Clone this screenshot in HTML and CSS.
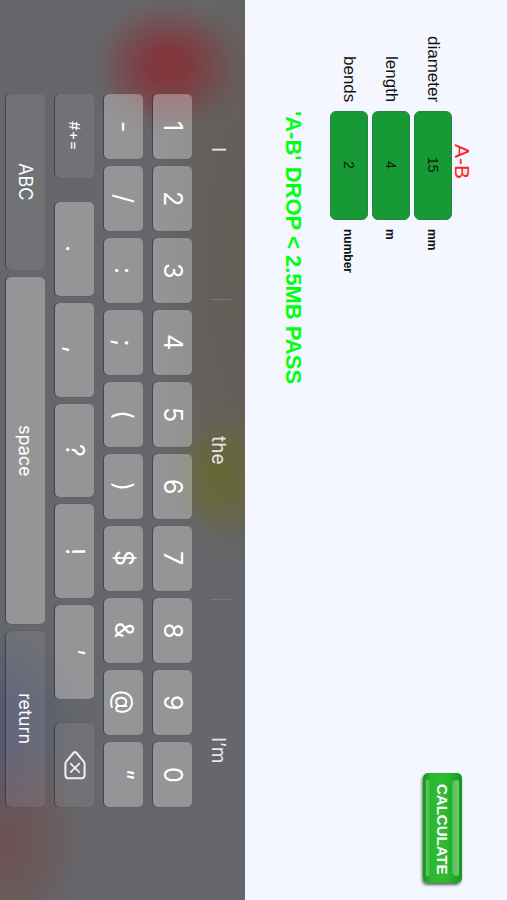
FILE: index.html
```html
<!DOCTYPE html>
<html lang="en">
<head>
    <meta charset="UTF-8">
    <meta name="viewport" content="width=device-width, initial-scale=1.0">
    <title>Pressure Drop</title>
    <link rel="stylesheet" href="styles.css">
</head>
<body>
    <main class="calculator">
        <form class="pipe-form" onsubmit="return false">
            <div class="pipe">
                <h1>A-B</h1>
                <div class="fields">
                    <label for="diameter">diameter</label>
                    <input type="text" id="diameter" value="15">
                    <span class="unit">mm</span>

                    <label for="length">length</label>
                    <input type="text" id="length" value="4">
                    <span class="unit">m</span>

                    <label for="bends">bends</label>
                    <input type="text" id="bends" value="2">
                    <span class="unit">number</span>
                </div>
            </div>
            <button type="submit" class="calculate">CALCULATE</button>
        </form>
        <p class="result">'A-B' DROP &lt; 2.5MB PASS</p>
    </main>

    <section class="keyboard">
        <div class="suggestions">
            <button type="button">I</button>
            <button type="button">the</button>
            <button type="button">I’m</button>
        </div>

        <div class="keys">
            <div class="key-row">
                <button type="button" class="key">1</button>
                <button type="button" class="key">2</button>
                <button type="button" class="key">3</button>
                <button type="button" class="key">4</button>
                <button type="button" class="key">5</button>
                <button type="button" class="key">6</button>
                <button type="button" class="key">7</button>
                <button type="button" class="key">8</button>
                <button type="button" class="key">9</button>
                <button type="button" class="key">0</button>
            </div>
            <div class="key-row">
                <button type="button" class="key">-</button>
                <button type="button" class="key">/</button>
                <button type="button" class="key">:</button>
                <button type="button" class="key">;</button>
                <button type="button" class="key">(</button>
                <button type="button" class="key">)</button>
                <button type="button" class="key">$</button>
                <button type="button" class="key">&amp;</button>
                <button type="button" class="key">@</button>
                <button type="button" class="key">”</button>
            </div>
            <div class="key-row spaced">
                <button type="button" class="key dark symbols">#+=</button>
                <div class="key-group">
                    <button type="button" class="key">.</button>
                    <button type="button" class="key">,</button>
                    <button type="button" class="key">?</button>
                    <button type="button" class="key">!</button>
                    <button type="button" class="key">’</button>
                </div>
                <button type="button" class="key dark backspace" aria-label="Backspace">
                    <svg width="22" height="30" viewBox="0 0 22 30" fill="none" stroke="#f0f0f1" stroke-width="2" stroke-linecap="round" stroke-linejoin="round">
                        <path d="M9.9 2.5 L2.2 11.6 Q1.4 12.6 1.4 14 V25 Q1.4 28.2 4.6 28.2 H17.4 Q20.6 28.2 20.6 25 V14 Q20.6 12.6 19.8 11.6 L12.1 2.5 Q11 1.3 9.9 2.5 Z"/>
                        <path d="M6.7 13.6 L15.3 22.2 M15.3 13.6 L6.7 22.2" stroke-width="1.7"/>
                    </svg>
                </button>
            </div>
            <div class="key-row">
                <button type="button" class="key dark word">ABC</button>
                <button type="button" class="key word space">space</button>
                <button type="button" class="key dark word">return</button>
            </div>
        </div>
    </section>
</body>
</html>
```
FILE: styles.css
```css
/* The screen is turned on its side: lines run downwards, rows stack right to left */
html {
    writing-mode: vertical-rl;
    text-orientation: sideways;
}

* {
    box-sizing: border-box;
}

body, h1, p {
    margin: 0;
}

body {
    display: flex;
    flex-direction: column;
    min-width: 100vw;
    height: 100vh;
    background-color: #f4f7ff;
    color: #111;
    font-family: "Liberation Sans", Arial, sans-serif;
}

input, button {
    writing-mode: vertical-rl;
    text-orientation: sideways;
    margin: 0;
    padding: 0;
    border: none;
    font-family: inherit;
}

button {
    cursor: pointer;
}

.calculator {
    flex: 1;
    padding-right: 35px;
}

.pipe-form {
    display: flex;
    justify-content: space-between;
    align-items: flex-start;
    padding-bottom: 17px;
}

h1 {
    margin-top: 107px;
    height: 109px;
    line-height: 20px;
    font-size: 21px;
    font-weight: normal;
    text-align: center;
    color: #f22;
}

.fields {
    display: grid;
    grid-template-columns: 102px 109px auto;
    grid-auto-rows: 38px;
    gap: 4px 9px;
    align-items: center;
}

.fields label {
    font-size: 17px;
    text-align: end;
}

.fields input {
    width: 38px;
    height: 109px;
    padding-bottom: 2px;
    border: 1px solid #23863a;
    border-radius: 6px;
    background-color: #179a35;
    color: #06200b;
    font-size: 14px;
    text-align: center;
}

.unit {
    padding-right: 2px;
    font-size: 12px;
    font-weight: bold;
}

.calculate {
    position: relative;
    width: 39px;
    height: 110px;
    margin-right: 10px;
    padding-top: 3px;
    border-radius: 5px;
    background: linear-gradient(to left, #12981a, #21ac26 20%, #30bd33 50%, #2bb72e 80%, #12981a);
    box-shadow: -1px 2px 3px rgba(0, 0, 0, 0.6);
    color: #fff;
    font-size: 15px;
    font-weight: bold;
}

/* glossy edges */
.calculate::before,
.calculate::after {
    content: "";
    position: absolute;
    top: 7px;
    bottom: 7px;
}

.calculate::before {
    right: 3px;
    width: 7px;
    border-radius: 6px 3px 3px 6px;
    background: linear-gradient(to left, rgba(255, 255, 255, 0.4), rgba(255, 255, 255, 0.2));
}

.calculate::after {
    left: 3px;
    width: 4px;
    border-radius: 2px 4px 4px 2px;
    background: linear-gradient(to right, rgba(255, 255, 255, 0.35), rgba(255, 255, 255, 0.1));
}

.result {
    margin-top: 111px;
    margin-right: 25px;
    line-height: 24px;
    font-size: 22px;
    font-weight: bold;
    color: #0f1;
}

.keyboard {
    padding-left: 6px;
    background-color: #65676b;
    background-image:
        radial-gradient(ellipse 82px 72px at 168px 66px, #82353a, rgba(130, 53, 58, 0.9) 25%, rgba(130, 53, 58, 0.5) 55%, rgba(130, 53, 58, 0.15) 80%, rgba(130, 53, 58, 0)),
        radial-gradient(ellipse 60px 80px at 222px 476px, rgba(104, 104, 48, 0.9), rgba(104, 104, 48, 0.6) 40%, rgba(104, 104, 48, 0.15) 75%, rgba(104, 104, 48, 0)),
        radial-gradient(ellipse 90px 330px at 245px 260px, rgba(99, 92, 84, 0.9), rgba(99, 92, 84, 0.7) 50%, rgba(99, 92, 84, 0)),
        radial-gradient(ellipse 80px 100px at 0 720px, rgba(82, 82, 116, 0.8), rgba(82, 82, 116, 0.4) 50%, rgba(82, 82, 116, 0)),
        radial-gradient(ellipse 80px 110px at 5px 840px, #6d5152, rgba(109, 81, 82, 0.6) 50%, rgba(109, 81, 82, 0));
    font-family: Inter, "Liberation Sans", sans-serif;
}

.suggestions {
    display: flex;
    width: 53px;
}

.suggestions button {
    flex: 1;
    background: linear-gradient(#77797c, #77797c) no-repeat right 13px bottom / 21px 1px;
    color: #e6e6e7;
    font-size: 19px;
}

.suggestions button:last-child {
    background: none;
}

.keys {
    display: flex;
    flex-direction: column;
    gap: 10px;
    padding: 94px 0 93px;
}

.key-row, .key-group {
    display: flex;
    gap: 7px;
}

.key-row.spaced {
    gap: 24px;
}

.key-group {
    flex: 1;
}

.key {
    flex: 1;
    width: 39px;
    border-radius: 5px;
    background-color: rgba(255, 255, 255, 0.3);
    box-shadow: -1px 0 1px rgba(0, 0, 0, 0.35);
    color: #fff;
    font-size: 25px;
}

.key.dark {
    background-color: rgba(255, 255, 255, 0.08);
}

.key.symbols, .key.backspace {
    flex: 0 0 84px;
    font-size: 15px;
}

.key.backspace {
    display: flex;
    align-items: center;
    justify-content: center;
}

.key.word {
    flex: 0 0 176px;
    font-size: 18px;
}

.key.space {
    flex: 1;
}
```
